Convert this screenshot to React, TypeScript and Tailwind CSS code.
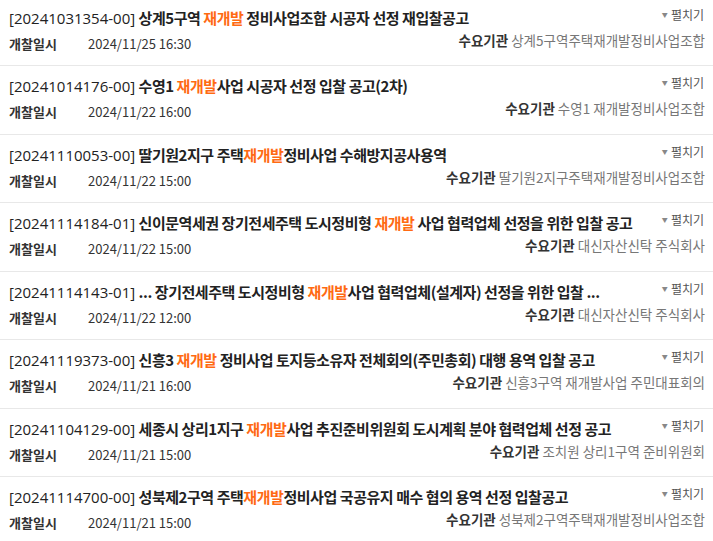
import React from "react";

interface Bid {
  no: string;
  pre: string;
  post: string;
  date: string;
  org: string;
}

const bids: Bid[] = [
  { no: "20241031354-00", pre: "상계5구역 ", post: " 정비사업조합 시공자 선정 재입찰공고", date: "2024/11/25 16:30", org: "상계5구역주택재개발정비사업조합" },
  { no: "20241014176-00", pre: "수영1 ", post: "사업 시공자 선정 입찰 공고(2차)", date: "2024/11/22 16:00", org: "수영1 재개발정비사업조합" },
  { no: "20241110053-00", pre: "딸기원2지구 주택", post: "정비사업 수해방지공사용역", date: "2024/11/22 15:00", org: "딸기원2지구주택재개발정비사업조합" },
  { no: "20241114184-01", pre: "신이문역세권 장기전세주택 도시정비형 ", post: " 사업 협력업체 선정을 위한 입찰 공고", date: "2024/11/22 15:00", org: "대신자산신탁 주식회사" },
  { no: "20241114143-01", pre: "... 장기전세주택 도시정비형 ", post: "사업 협력업체(설계자) 선정을 위한 입찰 ...", date: "2024/11/22 12:00", org: "대신자산신탁 주식회사" },
  { no: "20241119373-00", pre: "신흥3 ", post: " 정비사업 토지등소유자 전체회의(주민총회) 대행 용역 입찰 공고", date: "2024/11/21 16:00", org: "신흥3구역 재개발사업 주민대표회의" },
  { no: "20241104129-00", pre: "세종시 상리1지구 ", post: "사업 추진준비위원회 도시계획 분야 협력업체 선정 공고", date: "2024/11/21 15:00", org: "조치원 상리1구역 준비위원회" },
  { no: "20241114700-00", pre: "성북제2구역 주택", post: "정비사업 국공유지 매수 협의 용역 선정 입찰공고", date: "2024/11/21 15:00", org: "성북제2구역주택재개발정비사업조합" },
];

export default function App() {
  return (
    <div
      className="w-[713px] h-[541px] overflow-hidden bg-white"
      style={{ fontFamily: '"Noto Sans CJK KR", "Noto Sans", sans-serif' }}
    >
      <div className="-mt-[2.5px]">
        {bids.map((b) => (
          <div key={b.no} className="h-[68.5px] border-b border-[#e8e8e8] pl-[9px] pr-[9px] flex flex-col">
            {/* title line */}
            <div className="flex items-start justify-between pt-[8px]">
              <p className="text-[15px] leading-[24px] text-[#222] whitespace-nowrap">
                <span className="font-['Open_Sans']">[{b.no}]</span>{" "}
                <span className="font-bold tracking-[-0.45px]">
                  {b.pre}
                  <span className="text-[#ff6a13]">재개발</span>
                  {b.post}
                </span>
              </p>
              <span className="flex items-center gap-[3px] text-[12px] leading-[18px] text-[#555] whitespace-nowrap">
                <span className="text-[6px] text-[#888]">▼</span>펼치기
              </span>
            </div>
            {/* info line */}
            <div className="flex items-start justify-between">
              <div className="flex items-center text-[13px] leading-[20px] mt-[4px]">
                <span className="font-bold text-[#333] w-[79px]">개찰일시</span>
                <span className="text-[#333]">{b.date}</span>
              </div>
              <div className="text-[13.5px] leading-[20px] whitespace-nowrap -mr-[1px]">
                <span className="font-bold text-[#333]">수요기관</span>{" "}
                <span className="text-[#777]">{b.org}</span>
              </div>
            </div>
          </div>
        ))}
      </div>
    </div>
  );
}
